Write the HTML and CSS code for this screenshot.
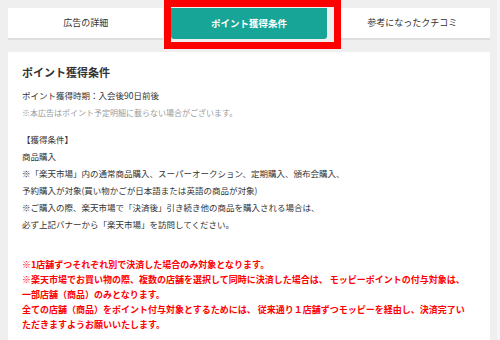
FILE: index.html
```html
<!DOCTYPE html>
<html lang="ja">
<head>
  <meta charset="UTF-8" />
  <title>ポイント獲得条件</title>
  <link rel="stylesheet" href="styles.css">
</head>
<body>
  <div class="page">
    <div class="tabs">
      <div class="tab">広告の詳細</div>
      <div class="tab active">ポイント獲得条件<span class="mark"></span></div>
      <div class="tab">参考になったクチコミ</div>
    </div>

    <div class="card">
      <h2 class="title">ポイント獲得条件</h2>
      <p class="period">ポイント獲得時期：入会後90日前後</p>
      <p class="note">※本広告はポイント予定明細に載らない場合がございます。</p>

      <div class="terms">
        <p>【獲得条件】</p>
        <p>商品購入</p>
        <p>※「楽天市場」内の通常商品購入、スーパーオークション、定期購入、頒布会購入、</p>
        <p>予約購入が対象(買い物かごが日本語または英語の商品が対象)</p>
        <p>※ご購入の際、楽天市場で「決済後」引き続き他の商品を購入される場合は、</p>
        <p>必ず上記バナーから「楽天市場」を訪問してください。</p>
      </div>

      <div class="warn">
        <p>※1店舗ずつそれぞれ別で決済した場合のみ対象となります。</p>
        <p>※楽天市場でお買い物の際、複数の店舗を選択して同時に決済した場合は、 モッピーポイントの付与対象は、</p>
        <p>一部店舗（商品）のみとなります。</p>
        <p>全ての店舗（商品）をポイント付与対象とするためには、 従来通り１店舗ずつモッピーを経由し、決済完了い</p>
        <p>ただきますようお願いいたします。</p>
      </div>
    </div>
  </div>
</body>
</html>
```

FILE: styles.css
```css
body {
  margin: 0;
  background: #efefef;
  color: #333;
  font-family: "Noto Sans CJK JP", "Noto Sans", sans-serif;
}
p { margin: 0; }
.page {
  height: 340px;
  overflow: hidden;
  padding: 8px 7px 0 8px;
  border-right: 3px solid #f6f6f6;
  box-sizing: border-box;
}
.tabs {
  display: flex;
  gap: 8px;
}
.tab {
  flex: 1;
  height: 30px;
  line-height: 30px;
  background: #fff;
  box-shadow: 0 2px 0 #dedede;
  text-align: center;
  font-size: 9px;
}
.tab.active {
  position: relative;
  background: #16a596;
  color: #fff;
  font-weight: bold;
  font-size: 9.5px;
  border-radius: 0 0 3px 3px;
  box-shadow: none;
  height: 31px;
}
.mark {
  position: absolute;
  left: -7px;
  top: -8px;
  width: 177px;
  height: 49px;
  border: 7px solid #ff0000;
  box-sizing: border-box;
}
.card {
  margin-top: 13px;
  background: #fff;
  padding: 12px 14px 20px;
  height: 300px;
}
.title {
  margin: 0;
  font-size: 11px;
  line-height: 16px;
  font-weight: bold;
  color: #333;
}
.period {
  margin-top: 8px;
  font-size: 8.5px;
  line-height: 14px;
}
.note {
  margin-top: 4px;
  font-size: 8px;
  line-height: 14px;
  color: #9a9a9a;
}
.terms {
  margin-top: 11px;
  font-size: 8.5px;
  line-height: 17px;
}
.warn {
  margin-top: 24px;
  font-size: 9px;
  line-height: 15px;
  font-weight: bold;
  color: #ff0000;
}
```
